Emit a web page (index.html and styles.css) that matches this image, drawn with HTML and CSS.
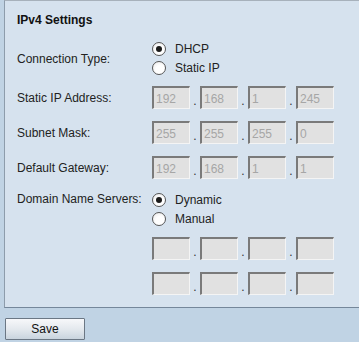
FILE: index.html
```
<!DOCTYPE html>
<html lang="en">

<head>
    <meta charset="UTF-8">
    <meta name="viewport" content="width=device-width, initial-scale=1.0">
    <title>IPv4 Settings</title>
    <link rel="stylesheet" href="styles.css">
</head>

<body>
    <div class="page">
        <div class="panel">
            <h2 class="title">IPv4 Settings</h2>

            <div class="row row-center conn">
                <span class="label">Connection Type:</span>
                <div class="radios">
                    <label class="radio"><input type="radio" name="conn" checked> DHCP</label>
                    <label class="radio"><input type="radio" name="conn"> Static IP</label>
                </div>
            </div>

            <div class="row ip-row">
                <span class="label">Static IP Address:</span>
                <div class="ip">
                    <input type="text" value="192" disabled><span class="dot">.</span>
                    <input type="text" value="168" disabled><span class="dot">.</span>
                    <input type="text" value="1" disabled><span class="dot">.</span>
                    <input type="text" value="245" disabled>
                </div>
            </div>

            <div class="row ip-row">
                <span class="label">Subnet Mask:</span>
                <div class="ip">
                    <input type="text" value="255" disabled><span class="dot">.</span>
                    <input type="text" value="255" disabled><span class="dot">.</span>
                    <input type="text" value="255" disabled><span class="dot">.</span>
                    <input type="text" value="0" disabled>
                </div>
            </div>

            <div class="row ip-row">
                <span class="label">Default Gateway:</span>
                <div class="ip">
                    <input type="text" value="192" disabled><span class="dot">.</span>
                    <input type="text" value="168" disabled><span class="dot">.</span>
                    <input type="text" value="1" disabled><span class="dot">.</span>
                    <input type="text" value="1" disabled>
                </div>
            </div>

            <div class="row dns">
                <span class="label label-top">Domain Name Servers:</span>
                <div class="radios">
                    <label class="radio"><input type="radio" name="dns" checked> Dynamic</label>
                    <label class="radio"><input type="radio" name="dns"> Manual</label>
                </div>
            </div>

            <div class="row ip-row dns1">
                <span class="label"></span>
                <div class="ip">
                    <input type="text" disabled><span class="dot">.</span>
                    <input type="text" disabled><span class="dot">.</span>
                    <input type="text" disabled><span class="dot">.</span>
                    <input type="text" disabled>
                </div>
            </div>

            <div class="row ip-row dns2">
                <span class="label"></span>
                <div class="ip">
                    <input type="text" disabled><span class="dot">.</span>
                    <input type="text" disabled><span class="dot">.</span>
                    <input type="text" disabled><span class="dot">.</span>
                    <input type="text" disabled>
                </div>
            </div>
        </div>

        <div class="actions">
            <button class="btn">Save</button>
        </div>
    </div>
</body>

</html>
```

FILE: styles.css
```
body {
    margin: 0;
    background: #c0d3e4;
    font-family: "Liberation Sans", Arial, sans-serif;
    font-size: 12px;
    color: #222;
    height: 342px;
    overflow: hidden;
}

.page {
    padding-left: 4px;
}

.panel {
    background: #d6e2ee;
    border-left: 1px solid #8d9cab;
    border-top: 1px solid #a7b1bb;
    border-bottom: 1px solid #75879a;
    padding: 0 0 11px 12px;
    height: 295px;
}

.title {
    margin: 0;
    padding-top: 12px;
    font-size: 12px;
    line-height: 14px;
    font-weight: bold;
    color: #111;
}

.row {
    display: flex;
}

.row-center {
    align-items: center;
}

.label {
    width: 135px;
    flex-shrink: 0;
}

.conn {
    margin-top: 12px;
}

.conn .label {
    padding-top: 1px;
}

.radios {
    display: flex;
    flex-direction: column;
}

.radio {
    display: flex;
    align-items: center;
    height: 19px;
    gap: 9px;
}

.radio input {
    appearance: none;
    -webkit-appearance: none;
    margin: 0;
    width: 14px;
    height: 14px;
    border-radius: 50%;
    border: 1px solid #555;
    background: radial-gradient(circle at 60% 65%, #ffffff 40%, #e6e6e6 100%);
    box-sizing: border-box;
    position: relative;
}

.radio input:checked::after {
    content: "";
    position: absolute;
    left: 3px;
    top: 3px;
    width: 6px;
    height: 6px;
    border-radius: 50%;
    background: #1a1a1a;
}

.ip-row {
    margin-top: 9px;
    align-items: center;
}

.ip-row + .ip-row {
    margin-top: 12px;
}

.dns1 {
    margin-top: 9px;
}

.dns2.ip-row {
    margin-top: 12px;
}

.ip {
    display: flex;
    align-items: flex-end;
}

.ip input {
    width: 38px;
    height: 23px;
    box-sizing: border-box;
    margin: 0;
    padding: 2px 0 0 2px;
    border-style: solid;
    border-width: 2px 1px 1px 2px;
    border-color: #7a7a7a #f4f4f4 #f4f4f4 #7a7a7a;
    background: #e1e1e1;
    color: #a6a6a6;
    font-family: "Liberation Sans", Arial, sans-serif;
    font-size: 12px;
}

.dot {
    width: 10px;
    text-align: center;
    line-height: 12px;
    padding-bottom: 2px;
    color: #333;
}

.dns {
    margin-top: 11px;
}

.label-top {
    line-height: 19px;
}

.actions {
    padding-top: 10px;
}

.btn {
    width: 80px;
    height: 22px;
    margin-left: 1px;
    border: 1px solid #6b7784;
    border-radius: 1px;
    background: linear-gradient(#f7f8fa, #e4e9ee 50%, #c9d4de);
    font-family: "Liberation Sans", Arial, sans-serif;
    font-size: 12px;
    color: #111;
    padding: 0;
}
```
